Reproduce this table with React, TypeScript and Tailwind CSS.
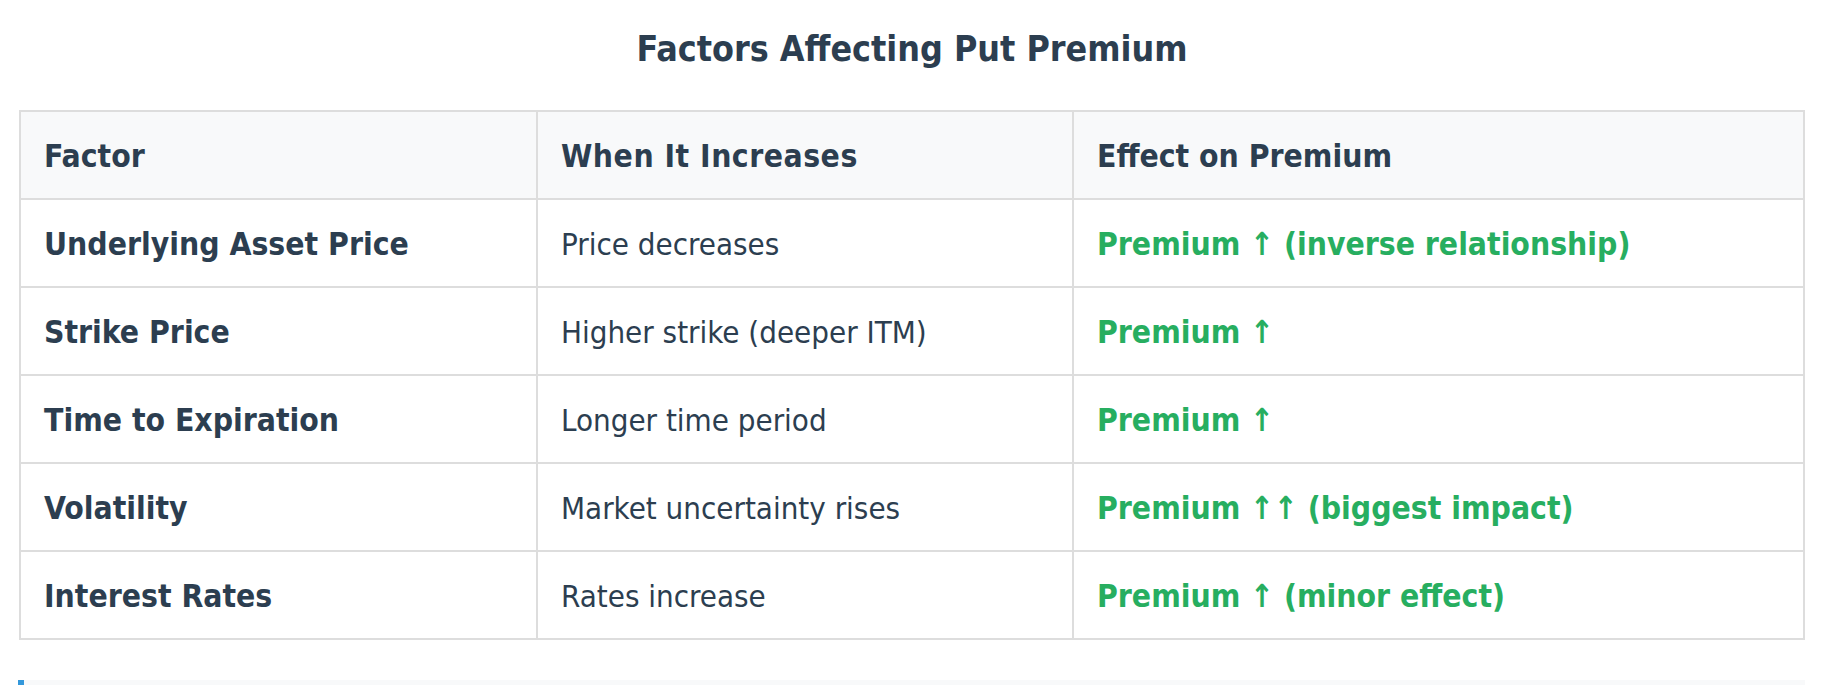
import React from "react";

type Row = { factor: string; when: string; effect: string };

const rows: Row[] = [
  { factor: "Underlying Asset Price", when: "Price decreases", effect: "Premium ↑ (inverse relationship)" },
  { factor: "Strike Price", when: "Higher strike (deeper ITM)", effect: "Premium ↑" },
  { factor: "Time to Expiration", when: "Longer time period", effect: "Premium ↑" },
  { factor: "Volatility", when: "Market uncertainty rises", effect: "Premium ↑↑ (biggest impact)" },
  { factor: "Interest Rates", when: "Rates increase", effect: "Premium ↑ (minor effect)" },
];

const cell = "border-2 border-[#dddddd] pl-[23px] pr-[23px] pt-[26px] pb-[24px] text-left align-middle leading-[36px]";
const bold = "font-bold text-[31.6px]";

export default function App() {
  return (
    <div className="h-[685px] overflow-hidden bg-white font-['DejaVu_Sans_Condensed','DejaVu_Sans',sans-serif] text-[#2c3e50]">
      <div className="pl-[19px] pr-[20px]">
        <h2 className="mt-[28px] text-center text-[35.5px] font-bold leading-[42px] text-[#2c3e50]">
          Factors Affecting Put Premium
        </h2>
        <table className="mt-[40px] w-full table-fixed border-collapse text-[31px]">
          <colgroup>
            <col className="w-[517px]" />
            <col className="w-[536px]" />
            <col />
          </colgroup>
          <thead>
            <tr className="bg-[#f8f9fa]">
              <th className={`${cell} ${bold}`}>Factor</th>
              <th className={`${cell} ${bold} tracking-[0.5px]`}>When It Increases</th>
              <th className={`${cell} ${bold}`}>Effect on Premium</th>
            </tr>
          </thead>
          <tbody>
            {rows.map((r) => (
              <tr key={r.factor}>
                <td className={`${cell} ${bold}`}>{r.factor}</td>
                <td className={`${cell} font-normal text-[31px]`}>{r.when}</td>
                <td className={`${cell} ${bold} text-[#27ae60]`}>{r.effect}</td>
              </tr>
            ))}
          </tbody>
        </table>
      </div>
      <div className="ml-[18px] mr-[20px] mt-[40px] h-[120px] border-l-[6px] border-[#3498db] bg-[#f8f9fa]" />
    </div>
  );
}
